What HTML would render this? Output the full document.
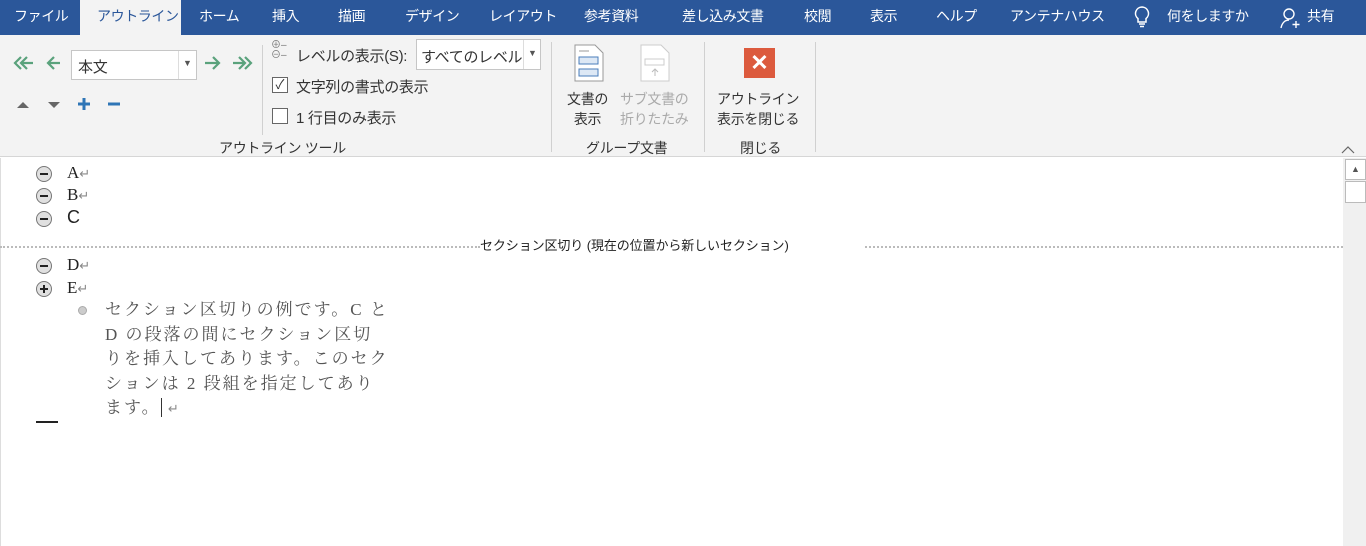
<!DOCTYPE html><html><head><meta charset="utf-8"><style>
*{margin:0;padding:0;box-sizing:border-box}
body{width:1366px;height:546px;overflow:hidden;background:#fff;font-family:"Liberation Sans","Noto Sans CJK JP",sans-serif;position:relative;color:#444}
.a{position:absolute;white-space:nowrap}
#tb{position:absolute;left:0;top:0;width:1366px;height:35px;background:#2b579a}
.t{position:absolute;top:0;height:35px;line-height:32px;color:#fff;font-size:14px;letter-spacing:-0.4px}
#rb{position:absolute;left:0;top:35px;width:1366px;height:122px;background:#f3f3f3;border-bottom:1px solid #d6d6d6}
.s{font-size:14px;color:#333;letter-spacing:-0.3px}
.sep{position:absolute;width:1px;background:#d0d0d0}
.doc{font-family:"Liberation Serif","Noto Serif CJK JP",serif;font-size:17px;color:#222}
.c{position:absolute;width:16px;height:16px;border-radius:50%;background:#e0e0e0;border:1px solid #777}
.c:after{content:"";position:absolute;left:3px;top:6px;width:8px;height:2px;background:#222}
.p:before{content:"";position:absolute;left:6px;top:3px;width:2px;height:8px;background:#222}
.ret{color:#888;font-size:13px}
</style></head><body>
<div id="tb">
<div class="t" style="left:14px">ファイル</div>
<div class="a" style="left:80px;top:0;width:101px;height:36px;background:#f3f3f3"></div>
<div class="t" style="left:97px;color:#2b579a">アウトライン</div>
<div class="t" style="left:199px">ホーム</div>
<div class="t" style="left:272px">挿入</div>
<div class="t" style="left:338px">描画</div>
<div class="t" style="left:405px">デザイン</div>
<div class="t" style="left:489px">レイアウト</div>
<div class="t" style="left:584px">参考資料</div>
<div class="t" style="left:682px">差し込み文書</div>
<div class="t" style="left:804px">校閲</div>
<div class="t" style="left:870px">表示</div>
<div class="t" style="left:936px">ヘルプ</div>
<div class="t" style="left:1010px">アンテナハウス</div>
<svg class="a" style="left:1133px;top:6px" width="18" height="22" viewBox="0 0 18 22"><path d="M9 1a6.5 6.5 0 0 0-4 11.6V16h8v-3.4A6.5 6.5 0 0 0 9 1z" fill="none" stroke="#fff" stroke-width="1.5"/><path d="M6 18h6M7 20.5h4" stroke="#fff" stroke-width="1.5"/></svg>
<div class="t" style="left:1167px">何をしますか</div>
<svg class="a" style="left:1280px;top:7px" width="22" height="22" viewBox="0 0 22 22"><circle cx="9" cy="7" r="5" fill="none" stroke="#fff" stroke-width="1.4"/><path d="M1 21c1-5 4-8 8-8" fill="none" stroke="#fff" stroke-width="1.4"/><path d="M16 14v7M12.5 17.5h7" stroke="#fff" stroke-width="1.4"/></svg>
<div class="t" style="left:1307px">共有</div>
</div>
<div id="rb">
<svg class="a" style="left:12px;top:20px" width="50" height="16" viewBox="0 0 50 16" fill="none" stroke="#5aa27c" stroke-width="2.2"><path d="M9 2L3 8l6 6M15 2L9 8l6 6M9 8h12"/><path d="M42 2l-6 6 6 6M36 8h12"/></svg>
<div class="a" style="left:71px;top:15px;width:126px;height:30px;background:#fff;border:1px solid #c6c6c6"><span class="a s" style="left:6px;top:5px;font-size:15px">本文</span><span class="a" style="left:106px;top:0;width:1px;height:28px;background:#ddd"></span><span class="a" style="left:111px;top:7px;font-size:9px;color:#555">▼</span></div>
<svg class="a" style="left:203px;top:20px" width="52" height="16" viewBox="0 0 52 16" fill="none" stroke="#5aa27c" stroke-width="2.2"><path d="M10 2l6 6-6 6M2 8h14"/><path d="M36 2l6 6-6 6M42 2l6 6-6 6M30 8h12"/></svg>
<svg class="a" style="left:17px;top:65px" width="48" height="10"><path d="M0 8L6 2L12 8z" fill="#666"/><path d="M31 2h12l-6 6z" fill="#666"/></svg>
<svg class="a" style="left:77px;top:62px" width="48" height="14" stroke="#2e75b6" stroke-width="3"><path d="M1 7h12M7 1v12M31 7h12"/></svg>
<div class="sep" style="left:262px;top:10px;height:90px"></div>
<div class="a" style="left:271px;top:6px;font-size:10px;color:#777;line-height:10px">⊕–<br>⊖–</div>
<div class="a s" style="left:296px;top:10px;font-size:15px">レベルの表示(S):</div>
<div class="a" style="left:416px;top:4px;width:125px;height:31px;background:#fff;border:1px solid #c6c6c6"><span class="a s" style="left:4px;top:6px;font-size:15px">すべてのレベル</span><span class="a" style="left:106px;top:0;width:1px;height:29px;background:#ddd"></span><span class="a" style="left:111px;top:8px;font-size:9px;color:#555">▼</span></div>
<div class="a" style="left:272px;top:42px;width:16px;height:16px;border:1px solid #666;background:#fff;font-size:13px;line-height:14px;text-align:center;color:#333">✓</div>
<div class="a s" style="left:296px;top:41px;font-size:15px">文字列の書式の表示</div>
<div class="a" style="left:272px;top:73px;width:16px;height:16px;border:1px solid #666;background:#fff"></div>
<div class="a s" style="left:296px;top:72px;font-size:15px">1 行目のみ表示</div>
<div class="a s" style="left:219px;top:103px">アウトライン ツール</div>
<div class="sep" style="left:551px;top:7px;height:110px"></div>
<svg class="a" style="left:574px;top:9px" width="30" height="38"><path d="M1 1h20l8 8v28H1z" fill="#fff" stroke="#999"/><rect x="5" y="13" width="19" height="7" fill="#dde8f5" stroke="#4a7ebb"/><rect x="5" y="25" width="19" height="7" fill="#dde8f5" stroke="#4a7ebb"/><path d="M5 7h10" stroke="#999"/></svg>
<svg class="a" style="left:640px;top:9px" width="30" height="38"><path d="M1 1h20l8 8v28H1z" fill="#fff" stroke="#ccc"/><rect x="5" y="15" width="19" height="6" fill="none" stroke="#ccc"/><path d="M15 32v-7M12 28l3-3 3 3" stroke="#bbb" fill="none"/></svg>
<div class="a s" style="left:567px;top:54px;line-height:20px;text-align:center">文書の<br>表示</div>
<div class="a s" style="left:620px;top:54px;line-height:20px;text-align:center;color:#aaa">サブ文書の<br>折りたたみ</div>
<div class="a s" style="left:586px;top:103px">グループ文書</div>
<div class="sep" style="left:704px;top:7px;height:110px"></div>
<div class="a" style="left:744px;top:13px;width:31px;height:30px;background:#dc5a3d;color:#fff;font-size:22px;font-weight:bold;text-align:center;line-height:30px">✕</div>
<div class="a s" style="left:717px;top:54px;line-height:20px;text-align:center">アウトライン<br>表示を閉じる</div>
<div class="a s" style="left:740px;top:103px">閉じる</div>
<div class="sep" style="left:815px;top:7px;height:110px"></div>
<svg class="a" style="left:1341px;top:111px" width="14" height="8"><path d="M1 7l6-6 6 6" fill="none" stroke="#666" stroke-width="1.2"/></svg>
</div>
<div class="a" style="left:0;top:158px;width:1px;height:388px;background:#ddd"></div>
<div class="a" style="left:1343px;top:158px;width:23px;height:388px;background:#f0f0f0"></div>
<div class="a" style="left:1345px;top:159px;width:21px;height:21px;background:#fff;border:1px solid #bbb;font-size:9px;text-align:center;line-height:19px;color:#555">▲</div>
<div class="a" style="left:1345px;top:181px;width:21px;height:22px;background:#fff;border:1px solid #bbb"></div>
<div class="c" style="left:36px;top:166px"></div><div class="a doc" style="left:67px;top:163px">A<span class="ret">↵</span></div>
<div class="c" style="left:36px;top:188px"></div><div class="a doc" style="left:67px;top:185px">B<span class="ret">↵</span></div>
<div class="c" style="left:36px;top:211px"></div><div class="a" style="left:67px;top:207px;font-size:18px;color:#222">C</div>
<div class="a" style="left:0;top:246px;width:480px;border-top:2px dotted #bbb"></div>
<div class="a" style="left:865px;top:246px;width:478px;border-top:2px dotted #bbb"></div>
<div class="a" style="left:480px;top:235px;font-size:13px;color:#222;letter-spacing:-0.1px">セクション区切り (現在の位置から新しいセクション)</div>
<div class="c" style="left:36px;top:258px"></div><div class="a doc" style="left:67px;top:255px">D<span class="ret">↵</span></div>
<div class="c p" style="left:36px;top:281px"></div><div class="a doc" style="left:67px;top:278px">E<span class="ret">↵</span></div>
<div class="a" style="left:78px;top:306px;width:9px;height:9px;border-radius:50%;background:#ccc;border:1px solid #aaa"></div>
<div class="a doc" style="left:105px;top:298px;line-height:24.5px;color:#555;letter-spacing:2px">セクション区切りの例です。C と<br>D の段落の間にセクション区切<br>りを挿入してあります。このセク<br>ションは 2 段組を指定してあり<br>ます。<span style="border-left:1px solid #333">&nbsp;</span><span class="ret">↵</span></div>
<div class="a" style="left:36px;top:421px;width:22px;height:2px;background:#222"></div>
</body></html>
